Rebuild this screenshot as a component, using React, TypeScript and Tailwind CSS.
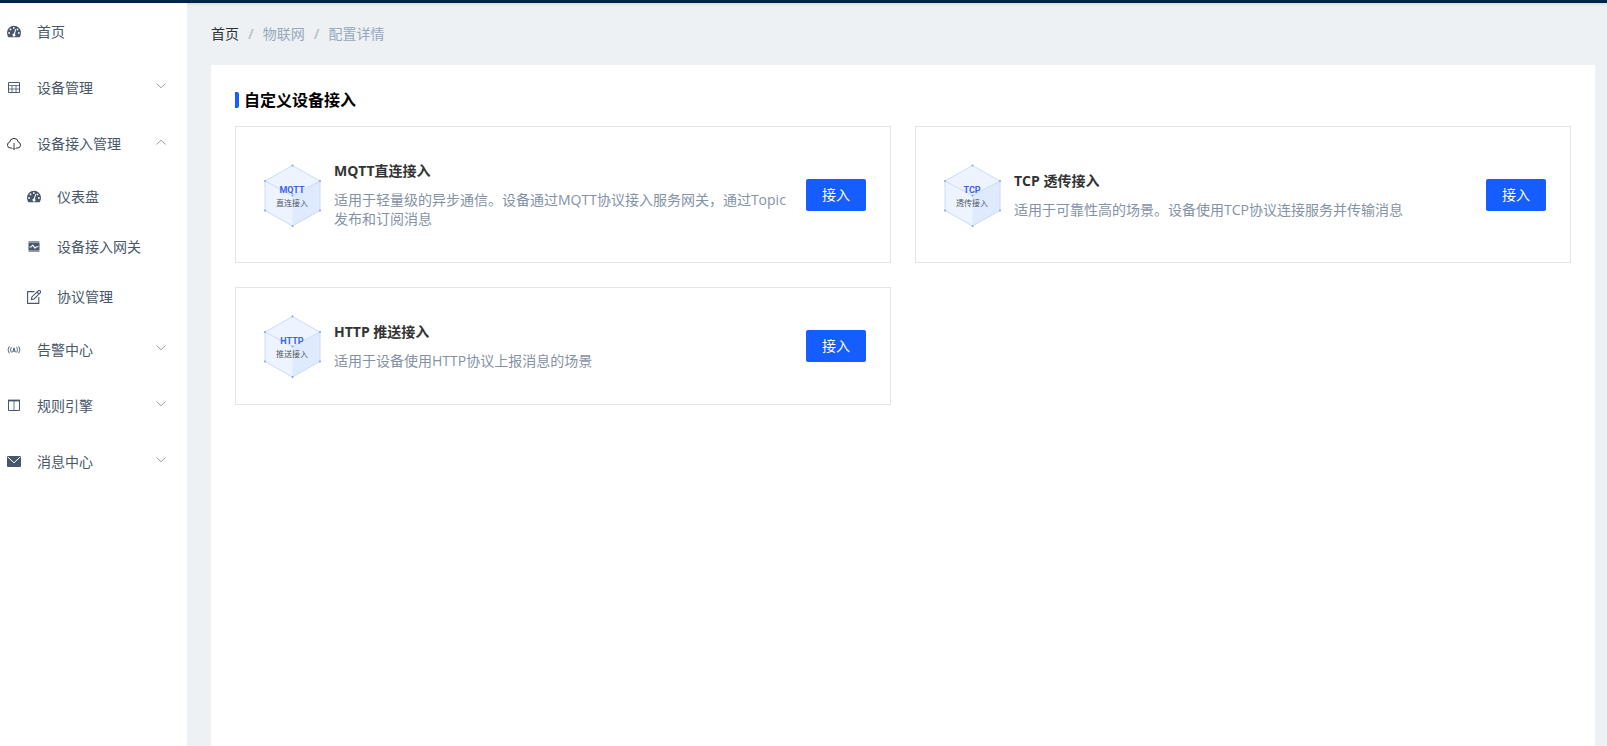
import type { ReactNode } from 'react';
import clsx from 'clsx';

interface MenuItem {
  key: string;
  label: string;
  icon: ReactNode;
  expandable?: boolean;
  children?: MenuItem[];
}

interface AccessType {
  key: string;
  protocol: string;
  mode: string;
  title: string;
  description: string;
}

const iconClass = 'size-[14px] shrink-0';

function DashboardIcon() {
  return (
    <svg viewBox="0 0 14 14" className={iconClass} aria-hidden="true">
      <path
        fill="currentColor"
        d="M7 .8a7 7 0 0 0-7 7c0 1.500.4 2.900 1.200 4.100.2.300.5.400.8.400h10c.3 0 .6-.1.8-.4A7.500 7.500 0 0 0 14 7.800a7 7 0 0 0-7-7Z"
      />
      <g fill="#fff">
        <circle cx="2.100" cy="8" r=".9" />
        <circle cx="3.500" cy="4.400" r=".9" />
        <circle cx="6.800" cy="2.900" r=".9" />
        <circle cx="10.500" cy="4.400" r=".9" />
        <circle cx="11.900" cy="8" r=".9" />
        <path d="M8.300 3.900 9.200 4.200 7.900 8.900a1.500 1.500 0 1 1-1-.3Z" />
      </g>
    </svg>
  );
}

function TableIcon() {
  return (
    <svg viewBox="0 0 14 14" className={iconClass} fill="none" stroke="currentColor" aria-hidden="true">
      <path d="M1.500 1.500h11v10h-11Z" />
      <path d="M2 4.500h10M2 8h10M5 4.500v7M9 4.500v7" strokeWidth=".8" />
    </svg>
  );
}

function CloudIcon() {
  return (
    <svg viewBox="0 0 14 14" className={iconClass} fill="none" stroke="#303133" aria-hidden="true">
      <path d="M5 11H3.500A3 3 0 0 1 2.700 5.100a4.350 4.350 0 0 1 8.600 0A3 3 0 0 1 10.500 11H9" />
      <path d="M7 6v6.500M5.500 11 7 12.500 8.500 11" strokeWidth=".9" />
    </svg>
  );
}

function GatewayIcon() {
  return (
    <svg viewBox="0 0 14 14" className={iconClass} aria-hidden="true">
      <rect x="1.500" y="1" width="11" height="2" rx=".5" fill="currentColor" opacity=".6" />
      <rect x="1.500" y="3" width="11" height="7.500" fill="currentColor" />
      <rect x="1.500" y="10.500" width="11" height="1.500" rx=".5" fill="currentColor" opacity=".6" />
      <path d="M2.500 7H4l1.700-1.900L8 8.200 9.500 6.700h2" fill="none" stroke="#fff" strokeWidth="1.100" />
    </svg>
  );
}

function EditIcon() {
  return (
    <svg viewBox="0 0 14 14" className={iconClass} fill="none" stroke="currentColor" strokeWidth="1.100" aria-hidden="true">
      <path d="M7.500 1.600H.6v11.800h11.200V7" />
      <path d="m4.400 9.600.5-2.700L11.200.8a1.300 1.300 0 0 1 2 2L7.100 9ZM10 2l2 2" />
    </svg>
  );
}

function AlarmIcon() {
  return (
    <svg viewBox="0 0 14 14" className={iconClass} fill="none" stroke="currentColor" strokeWidth=".9" aria-hidden="true">
      <path d="M2.300 3.300a6 6 0 0 0 0 7M4.400 4.100a4.600 4.600 0 0 0 0 5.400M11.700 3.300a6 6 0 0 1 0 7M9.600 4.100a4.600 4.600 0 0 1 0 5.400" />
      <path d="M5.600 9.300 7 4.800l1.400 4.500M6 8.100h2" />
    </svg>
  );
}

function ColumnsIcon() {
  return (
    <svg viewBox="0 0 14 14" className={iconClass} fill="none" stroke="currentColor" aria-hidden="true">
      <path d="M1.500 1.500v10h11v-10" />
      <path d="M7 1.500v10" strokeWidth=".8" />
      <path d="M1 1.500h12" strokeWidth="1.800" />
    </svg>
  );
}

function MailIcon() {
  return (
    <svg viewBox="0 0 14 14" className={iconClass} aria-hidden="true">
      <rect y="1" width="14" height="11" rx="1" fill="currentColor" />
      <path d="m.8 2 6.200 5.800L13.200 2" fill="none" stroke="#fff" />
    </svg>
  );
}

function ArrowIcon({ open }: { open?: boolean }) {
  return (
    <svg
      viewBox="0 0 12 12"
      className={clsx('mb-1 ml-auto size-3 shrink-0 text-[#909399]', open && 'rotate-180')}
      fill="none"
      stroke="currentColor"
      strokeWidth=".9"
      aria-hidden="true"
    >
      <path d="m1.500 3.500 4.500 4.300 4.500-4.300" />
    </svg>
  );
}

const menu: MenuItem[] = [
  { key: 'home', label: '首页', icon: <DashboardIcon /> },
  { key: 'device', label: '设备管理', icon: <TableIcon />, expandable: true },
  {
    key: 'access',
    label: '设备接入管理',
    icon: <CloudIcon />,
    expandable: true,
    children: [
      { key: 'dashboard', label: '仪表盘', icon: <DashboardIcon /> },
      { key: 'gateway', label: '设备接入网关', icon: <GatewayIcon /> },
      { key: 'protocol', label: '协议管理', icon: <EditIcon /> },
    ],
  },
  { key: 'alarm', label: '告警中心', icon: <AlarmIcon />, expandable: true },
  { key: 'rule', label: '规则引擎', icon: <ColumnsIcon />, expandable: true },
  { key: 'message', label: '消息中心', icon: <MailIcon />, expandable: true },
];

const accessTypes: AccessType[] = [
  {
    key: 'mqtt',
    protocol: 'MQTT',
    mode: '直连接入',
    title: 'MQTT直连接入',
    description: '适用于轻量级的异步通信。设备通过MQTT协议接入服务网关，通过Topic发布和订阅消息',
  },
  {
    key: 'tcp',
    protocol: 'TCP',
    mode: '透传接入',
    title: 'TCP 透传接入',
    description: '适用于可靠性高的场景。设备使用TCP协议连接服务并传输消息',
  },
  {
    key: 'http',
    protocol: 'HTTP',
    mode: '推送接入',
    title: 'HTTP 推送接入',
    description: '适用于设备使用HTTP协议上报消息的场景',
  },
];

function Sidebar() {
  return (
    <nav className="w-[187px] shrink-0 bg-white pt-px text-[#48576a]">
      <ul>
        {menu.map((item) => (
          <li key={item.key}>
            {item.expandable ? (
              <button
                type="button"
                aria-expanded={Boolean(item.children)}
                className="flex h-14 w-full items-center gap-4 pr-5 pl-[7px]"
              >
                {item.icon}
                <span>{item.label}</span>
                <ArrowIcon open={Boolean(item.children)} />
              </button>
            ) : (
              <a href="#" className="flex h-14 items-center gap-4 pl-[7px]">
                {item.icon}
                <span>{item.label}</span>
              </a>
            )}
            {item.children && (
              <ul>
                {item.children.map((child) => (
                  <li key={child.key}>
                    <a href="#" className="flex h-[50px] items-center gap-4 pl-[27px]">
                      {child.icon}
                      <span>{child.label}</span>
                    </a>
                  </li>
                ))}
              </ul>
            )}
          </li>
        ))}
      </ul>
    </nav>
  );
}

function Breadcrumb() {
  return (
    <nav aria-label="breadcrumb" className="flex h-[62px] items-center gap-[9px] text-[#97a8be]">
      <a href="#" className="text-[#303133]">
        首页
      </a>
      <span className="font-bold text-[#c0c4cc]">/</span>
      <span>物联网</span>
      <span className="font-bold text-[#c0c4cc]">/</span>
      <span>配置详情</span>
    </nav>
  );
}

function ProtocolCube({ protocol, mode }: { protocol: string; mode: string }) {
  const points = ['32.5,2.5', '60,18', '60,47.5', '32.5,63', '5,47.5', '5,18'];

  return (
    <svg viewBox="0 0 64 64" className="size-16 shrink-0" aria-hidden="true">
      <polygon points={points.join(' ')} fill="#edf4ff" />
      <polygon points="32.5,32.5 60,18 60,47.5 32.5,63" fill="#dfeafe" />
      <path
        d="M32.500 2.500 60 18v29.500L32.500 63 5 47.500V18ZM5 18l27.500 14.500L60 18"
        fill="none"
        stroke="#c9dcfd"
        strokeWidth="1"
      />
      {[...points, '32.5,32.5'].map((point) => {
        const [cx, cy] = point.split(',');
        return <circle key={point} cx={cx} cy={cy} r=".9" fill="#6d9ff8" />;
      })}
      <text x="32" y="30" textAnchor="middle" className="fill-[#3a62ee] font-[Roboto] text-[9px] font-bold">
        {protocol}
      </text>
      <text x="32" y="43" textAnchor="middle" className="fill-[#50565f] text-[8px]">
        {mode}
      </text>
    </svg>
  );
}

function AccessCard({ item }: { item: AccessType }) {
  return (
    <article className="flex items-center gap-[10px] border border-[#e4e5ea] px-6 py-[26px]">
      <ProtocolCube protocol={item.protocol} mode={item.mode} />
      <div className="min-w-0 flex-1 py-2 leading-[19px]">
        <h3 className="mb-[10px] font-bold text-[#333]">{item.title}</h3>
        <p className="text-[#8492a6]">{item.description}</p>
      </div>
      <button type="button" className="h-8 w-[60px] shrink-0 rounded-xs bg-[#165dff] text-white">
        接入
      </button>
    </article>
  );
}

export default function App() {
  return (
    <div className="flex min-h-screen flex-col bg-[#edf1f4] font-['Open_Sans','Noto_Sans_CJK_SC',sans-serif] text-sm">
      <header className="h-[3px] bg-[#00244d] shadow-sm" />
      <div className="flex flex-1">
        <Sidebar />
        <main className="flex min-w-0 flex-1 flex-col pr-3 pl-6">
          <Breadcrumb />
          <section className="flex-1 bg-white p-6">
            <h2 className="mb-[15px] flex h-[22px] items-center gap-[5px] text-base font-bold text-black">
              <span className="h-4 w-1 rounded-r-xs bg-[#165dff]" />
              自定义设备接入
            </h2>
            <div className="grid grid-cols-2 gap-6">
              {accessTypes.map((item) => (
                <AccessCard key={item.key} item={item} />
              ))}
            </div>
          </section>
        </main>
      </div>
    </div>
  );
}
